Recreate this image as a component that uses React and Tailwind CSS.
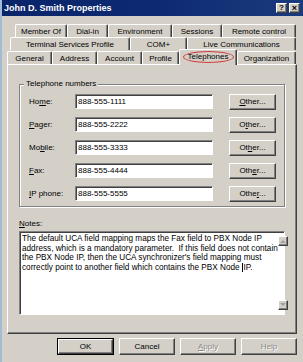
import React from "react";

const row1 = [
  ["Member Of", "w-[52px]"],
  ["Dial-in", "w-[41px]"],
  ["Environment", "w-[64px]"],
  ["Sessions", "w-[50px]"],
  ["Remote control", "w-[74px]"],
];
const row2 = [
  ["Terminal Services Profile", "w-[120px]"],
  ["COM+", "w-[57px]"],
  ["Live Communications", "w-[109px]"],
];
const row3 = [
  ["General", "w-[45px]"],
  ["Address", "w-[45px]"],
  ["Account", "w-[45px]"],
  ["Profile", "w-[37px]"],
  ["Telephones", "w-[58px]", true],
  ["Organization", "w-[59px]"],
];

function Tab({ label, w, selected }) {
  if (selected) {
    return (
      <div
        className={`${w} relative z-10 h-[16px] -mb-[1px] bg-[#d4d0c8] border-t border-l border-white border-r border-r-[#404040] shadow-[inset_-1px_0_0_#808080] rounded-t-[2px] flex items-start justify-center pt-[2px] leading-[10px]`}
      >
        {label}
        <span className="absolute left-[3px] right-[2px] top-[1px] h-[12px] rounded-[50%] border border-[#d23b3b]" />
      </div>
    );
  }
  return (
    <div
      className={`${w} h-[13px] bg-[#d4d0c8] border-t border-l border-white border-r border-r-[#404040] shadow-[inset_-1px_0_0_#808080] rounded-t-[2px] flex items-center justify-center leading-[10px] pt-[1px]`}
    >
      {label}
    </div>
  );
}

const raised =
  "border border-t-white border-l-white border-r-[#404040] border-b-[#404040] shadow-[inset_-1px_-1px_0_#808080] bg-[#d4d0c8]";
const sunken =
  "border border-t-[#808080] border-l-[#808080] border-r-white border-b-white shadow-[inset_1px_1px_0_#404040] bg-white";

function PhoneRow({ label, value, other }) {
  return (
    <div className="flex items-center h-[15px]">
      <div className="w-[55px] pl-[9px] leading-[10px]">{label}</div>
      <div className={`${sunken} w-[138px] h-[15px] flex items-center pl-[2px] leading-[10px]`}>
        {value}
      </div>
      <div
        className={`${raised} ml-[16px] w-[47px] h-[16px] flex items-center justify-center leading-[10px]`}
      >
        {other}
      </div>
    </div>
  );
}

function Arrow({ up }) {
  return (
    <div className={`${raised} w-[10px] h-[10px] flex items-center justify-center`}>
      <svg width="6" height="4" viewBox="0 0 6 4">
        {up ? (
          <polygon points="0,4 6,4 3,1" fill="#a0a0a0" />
        ) : (
          <polygon points="0,0 6,0 3,3" fill="#a0a0a0" />
        )}
      </svg>
    </div>
  );
}

export default function App() {
  return (
    <div className="w-[303px] h-[362px] bg-[#d4d0c8] flex flex-col overflow-hidden text-[8px] text-black font-['Liberation_Sans',Arial,sans-serif] border-l-2 border-l-[#a3bcd6]">
      {/* title bar */}
      <div className="h-[16px] -ml-[2px] bg-gradient-to-r from-[#0a246a] via-[#0d2a70] to-[#1a3a7e] flex items-center justify-between pl-[4px] pr-[3px]">
        <span className="text-white font-bold text-[9px] leading-[10px]">John D. Smith Properties</span>
        <div className="flex gap-[1px]">
          <div className={`${raised} w-[11px] h-[10px] flex items-center justify-center font-bold text-[8px] leading-[8px]`}>
            ?
          </div>
          <div className={`${raised} w-[11px] h-[10px] flex items-center justify-center font-bold text-[9px] leading-[8px] ml-[1px]`}>
            ×
          </div>
        </div>
      </div>

      <div className="flex-1 flex flex-col pl-[5px] pr-[6px]">
        {/* tabs */}
        <div className="mt-[8px] flex flex-col">
          <div className="flex ml-[8px]">
            {row1.map(([l, w]) => (
              <Tab key={l} label={l} w={w} />
            ))}
          </div>
          <div className="flex ml-[3px]">
            {row2.map(([l, w]) => (
              <Tab key={l} label={l} w={w} />
            ))}
          </div>
          <div className="flex items-end h-[14px]">
            {row3.map(([l, w, s]) => (
              <Tab key={l} label={l} w={w} selected={s} />
            ))}
          </div>
        </div>

        {/* panel */}
        <div className="w-[290px] h-[270px] border border-t-white border-l-white border-r-[#404040] border-b-[#404040] shadow-[inset_-1px_-1px_0_#808080] px-[11px] pt-[14px] flex flex-col">
          <fieldset className="border border-[#808080] shadow-[inset_1px_1px_0_white,1px_1px_0_white] h-[128px] w-[266px] px-0 pt-[1px] m-0 flex flex-col">
            <legend className="ml-[4px] px-[2px] leading-[10px] bg-[#d4d0c8]">Telephone numbers</legend>
            <div className="flex flex-col gap-[8px] pt-[4px]">
              <PhoneRow
                label={<span>Ho<u>m</u>e:</span>}
                value="888-555-1111"
                other={<span><u>O</u>ther...</span>}
              />
              <PhoneRow
                label={<span><u>P</u>ager:</span>}
                value="888-555-2222"
                other={<span>O<u>t</u>her...</span>}
              />
              <PhoneRow
                label={<span>Mo<u>b</u>ile:</span>}
                value="888-555-3333"
                other={<span>Ot<u>h</u>er...</span>}
              />
              <PhoneRow
                label={<span><u>F</u>ax:</span>}
                value="888-555-4444"
                other={<span>Oth<u>e</u>r...</span>}
              />
              <PhoneRow
                label={<span><u>I</u>P phone:</span>}
                value="888-555-5555"
                other={<span>Othe<u>r</u>...</span>}
              />
            </div>
          </fieldset>

          <div className="mt-[12px] leading-[10px]">
            <u>N</u>otes:
          </div>
          <div className={`${sunken} mt-[2px] w-[266px] h-[84px] flex`}>
            <div className="flex-1 pl-[2px] pt-[2px] leading-[9.7px] whitespace-nowrap text-[8.2px]">
              <div>The default UCA field mapping maps the Fax field to PBX Node IP</div>
              <div>address, which is a mandatory parameter.&nbsp; If this field does not contain</div>
              <div>the PBX Node IP, then the UCA synchronizer's field mapping must</div>
              <div>
                correctly point to another field which contains the PBX Node
                <span className="inline-block w-[1px] h-[9px] bg-black align-middle ml-[2px] mr-[1px]" />
                IP.
              </div>
            </div>
            <div className="w-[12px] flex flex-col items-center py-[4px] pr-[1px]">
              <Arrow up />
              <div className="flex-1" />
              <Arrow />
            </div>
          </div>
        </div>

        {/* buttons */}
        <div className="mt-[4px] flex justify-end gap-[5px] pr-[0px]">
          <div className="border border-black">
            <div className={`${raised} w-[55px] h-[15px] flex items-center justify-center leading-[10px]`}>OK</div>
          </div>
          <div className={`${raised} w-[56px] h-[17px] flex items-center justify-center leading-[10px]`}>Cancel</div>
          <div className={`${raised} w-[56px] h-[17px] flex items-center justify-center leading-[10px] text-[#8a8a8a] [text-shadow:1px_1px_0_white]`}>
            <span><u>A</u>pply</span>
          </div>
          <div className={`${raised} w-[56px] h-[17px] flex items-center justify-center leading-[10px] text-[#8a8a8a] [text-shadow:1px_1px_0_white]`}>
            Help
          </div>
        </div>
      </div>
    </div>
  );
}
